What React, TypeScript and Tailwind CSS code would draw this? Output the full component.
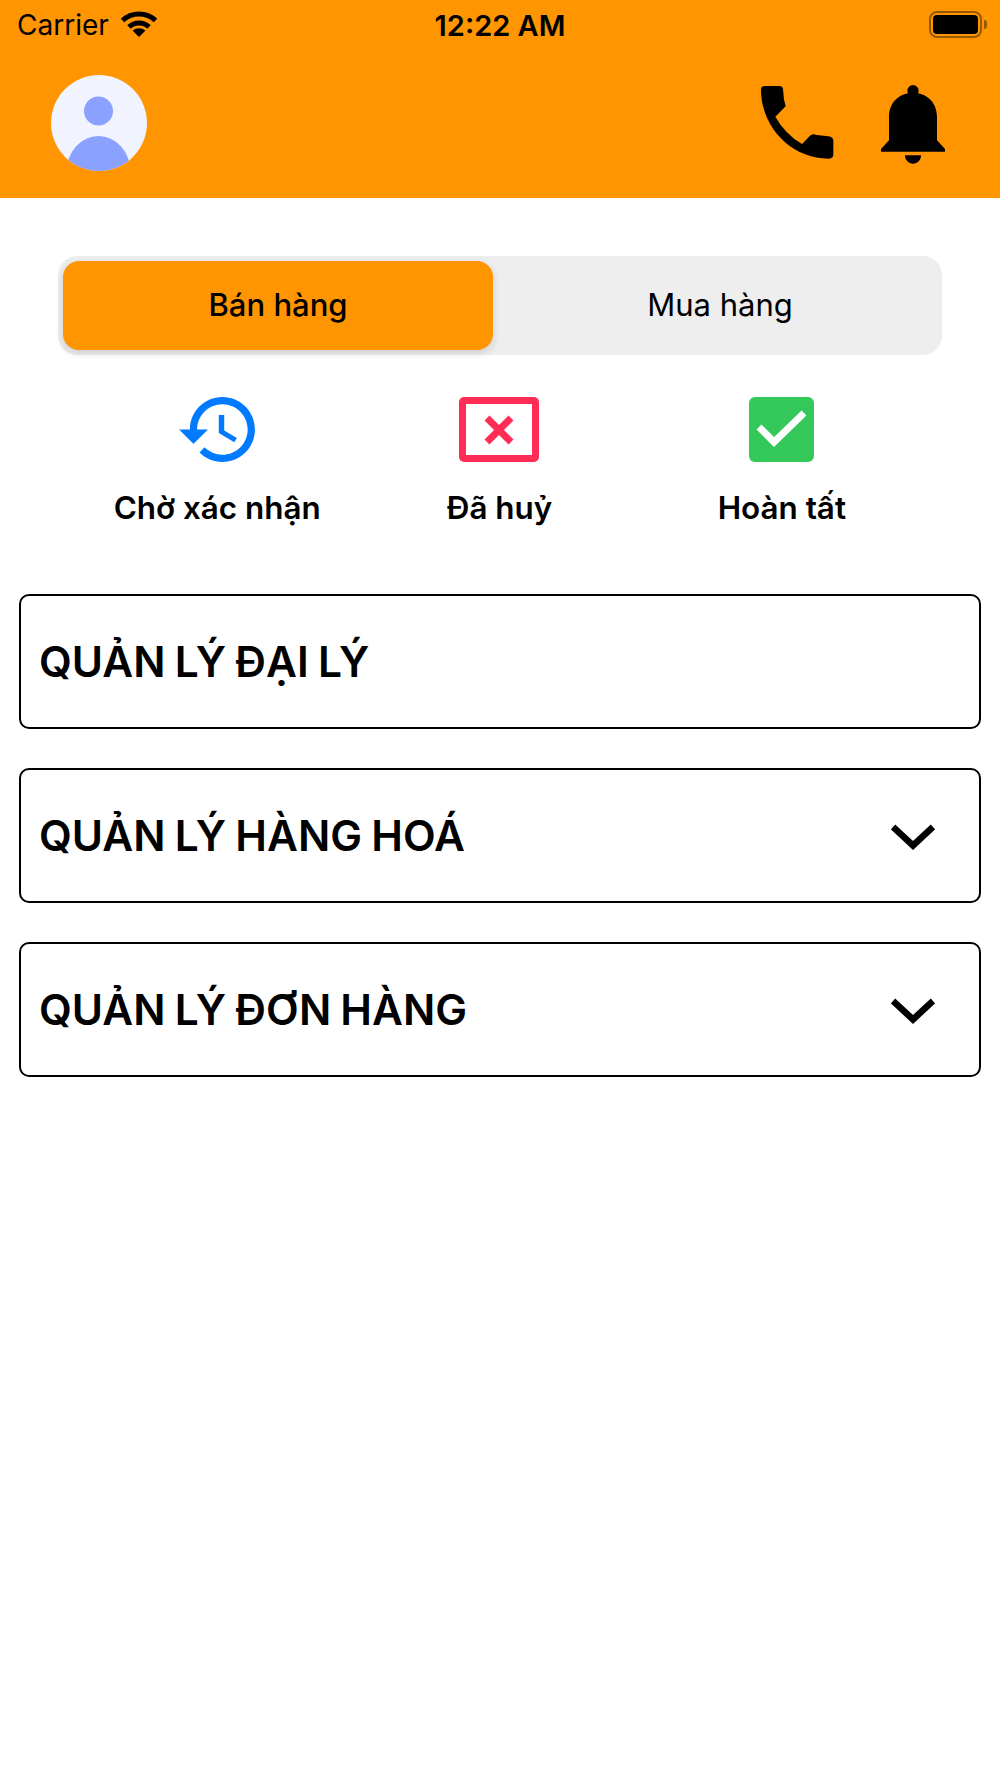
const font = { fontFamily: 'Inter, "Noto Sans", sans-serif' };

function Wifi() {
  return (
    <svg width="38" height="28" viewBox="0 0 38 28" fill="none" stroke="black">
      <path d="M2.5 10.5C11.5 1.8 26.5 1.8 35.5 10.5" strokeWidth="5" />
      <path d="M9 17C14.5 11.6 23.5 11.6 29 17" strokeWidth="5" />
      <path d="M19 27L12.5 20.6C16 17.3 22 17.3 25.5 20.6Z" fill="black" stroke="none" />
    </svg>
  );
}

function Battery() {
  return (
    <div className="flex items-center gap-[2px] pt-[1px]">
      <div className="w-[53px] h-[27px] rounded-[8px] border-[2.5px] border-black/40 p-[2px]">
        <div className="w-full h-full rounded-[4px] bg-black" />
      </div>
      <div className="w-[3px] h-[9px] rounded-r-[3px] bg-black/40" />
    </div>
  );
}

function Avatar() {
  return (
    <svg width="96" height="96" viewBox="0 0 96 96">
      <defs>
        <clipPath id="avatar-clip">
          <circle cx="48" cy="48" r="48" />
        </clipPath>
      </defs>
      <circle cx="48" cy="48" r="48" fill="#f1f4ff" />
      <circle cx="47.5" cy="36" r="14.5" fill="#8aa1ff" />
      <ellipse cx="47.5" cy="97" rx="32" ry="36" fill="#8aa1ff" clipPath="url(#avatar-clip)" />
    </svg>
  );
}

function PhoneIcon() {
  return (
    <svg width="74" height="74" viewBox="780 258 222 222" fill="black">
      <path d="M795 261H838Q849 261 849 272L850 280Q850 300 857 322L826 353Q855 405 906 435L930 410Q938 402 950 408L985 412Q1000 414 1000 425V466Q1000 479 987 479C870 479 783 380 783 272Q783 261 795 261Z" />
    </svg>
  );
}

function BellIcon() {
  return (
    <svg width="64" height="80" viewBox="1143 255 192 240" fill="black">
      <circle cx="1239" cy="272" r="17" />
      <path d="M1143 455V447L1167 421V350C1167 305 1200 278 1239 278C1278 278 1311 305 1311 350V421L1335 447V455Z" />
      <path d="M1215 466H1263C1263 481 1252 491 1239 491C1226 491 1215 481 1215 466Z" />
    </svg>
  );
}

function HistoryIcon() {
  return (
    <svg width="76" height="65" viewBox="1 3 21 18" fill="#007aff">
      <path d="M13 3c-4.97 0-9 4.03-9 9H1l3.89 3.89.07.14L9 12H6c0-3.87 3.13-7 7-7s7 3.13 7 7-3.13 7-7 7c-1.93 0-3.68-.79-4.94-2.06l-1.42 1.42C8.27 19.99 10.51 21 13 21c4.97 0 9-4.03 9-9s-4.03-9-9-9zm-1 5v5l4.28 2.54.72-1.21-3.5-2.08V8H12z" />
    </svg>
  );
}

function CancelIcon() {
  return (
    <div className="w-[80px] h-[65px] rounded-[5px] border-[7px] border-[#ff2d55] flex items-center justify-center">
      <svg width="30" height="30" viewBox="0 0 30 30" stroke="#ff2d55" strokeWidth="7">
        <path d="M3 3L27 27M27 3L3 27" />
      </svg>
    </div>
  );
}

function DoneIcon() {
  return (
    <div className="w-[65px] h-[65px] rounded-[6px] bg-[#34c759]">
      <svg width="65" height="65" viewBox="0 0 65 65" fill="none" stroke="white" strokeWidth="7">
        <path d="M10 30L25 45L55 16" />
      </svg>
    </div>
  );
}

function Chevron() {
  return (
    <svg width="44" height="28" viewBox="0 0 44 28" fill="none" stroke="black" strokeWidth="6.5">
      <path d="M2 4L22 22.5L42 4" />
    </svg>
  );
}

function MenuCard({ title, expandable }: { title: string; expandable?: boolean }) {
  return (
    <div className="h-[135px] rounded-[10px] border-[2.6px] border-black flex items-center justify-between pl-[18px] pr-[44px] pt-[2px]">
      <span className="text-[42.5px] font-semibold [word-spacing:-1.5px] text-black leading-none">{title}</span>
      {expandable && <Chevron />}
    </div>
  );
}

export default function App() {
  return (
    <div className="min-h-[1778px] bg-white flex flex-col" style={font}>
      <header className="h-[198px] bg-[#ff9500] text-black">
        <div className="h-[48px] pl-[17px] pr-[13px] grid grid-cols-[1fr_auto_1fr] items-center">
          <div className="flex items-center gap-[11px]">
            <span className="text-[28px] leading-none pt-[2px]">Carrier</span>
            <Wifi />
          </div>
          <span className="text-[29px] font-semibold leading-none pr-[4px] pt-[2px]">12:22 AM</span>
          <div className="flex justify-end">
            <Battery />
          </div>
        </div>
        <div className="mt-[27px] pl-[51px] pr-[55px] flex items-start justify-between">
          <Avatar />
          <div className="flex items-start gap-[47px] pt-[10px]">
            <PhoneIcon />
            <BellIcon />
          </div>
        </div>
      </header>

      <main className="flex flex-col">
        <div className="mt-[58px] mx-[58px] h-[99px] rounded-[19px] bg-[#eeeeee] p-[5px] flex">
          <div className="w-[430px] rounded-[16px] bg-[#ff9500] shadow-[0_3px_8px_rgba(0,0,0,0.15)] flex items-center justify-center text-[31px] font-medium text-black">
            Bán hàng
          </div>
          <div className="flex-1 pl-[10px] flex items-center justify-center text-[31px] text-black">Mua hàng</div>
        </div>

        <div className="mt-[42px] ml-[76px] mr-[77px] grid grid-cols-3">
          {[
            { label: 'Chờ xác nhận', icon: <HistoryIcon /> },
            { label: 'Đã huỷ', icon: <CancelIcon /> },
            { label: 'Hoàn tất', icon: <DoneIcon /> },
          ].map((item) => (
            <div key={item.label} className="flex flex-col items-center">
              {item.icon}
              <span className="mt-[26px] text-[31.4px] leading-[40px] font-semibold text-black">{item.label}</span>
            </div>
          ))}
        </div>

        <div className="mt-[66px] mx-[19px] flex flex-col gap-[39px]">
          <MenuCard title="QUẢN LÝ ĐẠI LÝ" />
          <MenuCard title="QUẢN LÝ HÀNG HOÁ" expandable />
          <MenuCard title="QUẢN LÝ ĐƠN HÀNG" expandable />
        </div>
      </main>
    </div>
  );
}
